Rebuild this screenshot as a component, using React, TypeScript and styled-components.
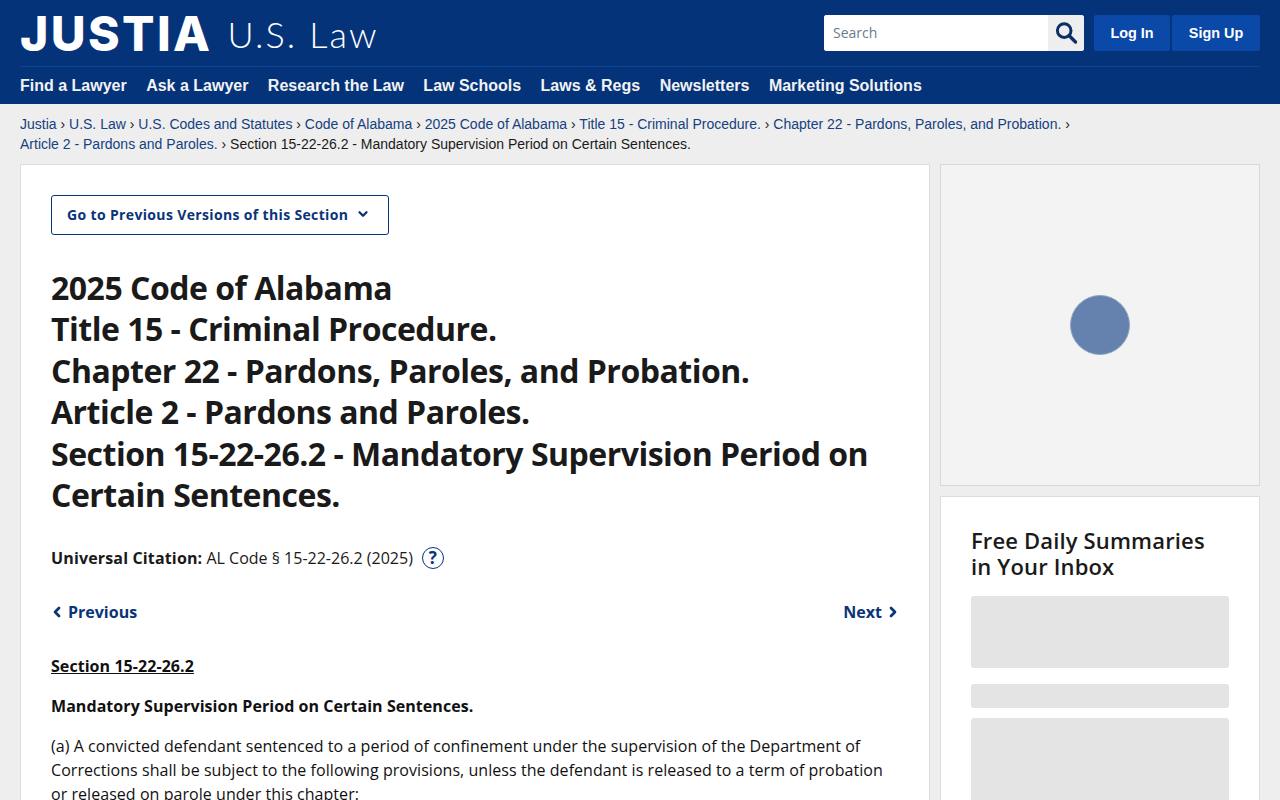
import React from "react";
import styled, { createGlobalStyle } from "styled-components";
import { ChevronDown, ChevronLeft, ChevronRight } from "lucide-react";

const NAVY = "#04337a";
const LINK = "#0a3478";
const SANS = '"Open Sans", sans-serif';
const ARIAL = '"Liberation Sans", Arial, sans-serif';

const GlobalStyle = createGlobalStyle`
  html, body {
    margin: 0;
    padding: 0;
    height: 800px;
    overflow: hidden;
    background: #eeeeee;
    color: #1a1a1a;
    font-family: ${SANS};
  }
  * {
    box-sizing: border-box;
  }
`;

const Header = styled.header`
  height: 104px;
  padding: 0 20px;
  background: ${NAVY};
`;

const HeaderTop = styled.div`
  display: flex;
  align-items: flex-start;
  justify-content: space-between;
  height: 67px;
  border-bottom: 1px solid #0d4391;
`;

const Logo = styled.a`
  display: flex;
  align-items: flex-start;
  gap: 15px;
  height: 66px;
  color: #fff;
  white-space: nowrap;
`;

const LogoMark = styled.span`
  margin-top: 6px;
  font-family: Inter, sans-serif;
  font-size: 48px;
  line-height: 56px;
  font-weight: 800;
  letter-spacing: 2.4px;
`;

const LogoSection = styled.span`
  margin-top: 6px;
  font-family: Lato, sans-serif;
  font-size: 36px;
  line-height: 56px;
  font-weight: 300;
  letter-spacing: 2.1px;
`;

const HeaderActions = styled.div`
  display: flex;
  align-items: center;
  gap: 2px;
  padding-top: 15px;
`;

const SearchForm = styled.form`
  display: flex;
  width: 260px;
  height: 36px;
  margin-right: 8px;
  overflow: hidden;
  background: #fff;
  border-radius: 3px;
`;

const SearchInput = styled.input`
  flex: 1;
  min-width: 0;
  padding: 0 9px 2px;
  border: 0;
  outline: 0;
  font-family: ${SANS};
  font-size: 14px;
  &::placeholder {
    color: #6b7a90;
    opacity: 1;
  }
`;

const SearchButton = styled.button`
  display: flex;
  align-items: center;
  justify-content: center;
  width: 36px;
  padding: 0;
  border: 0;
  background: #eeeeee;
`;

const AuthButton = styled.a`
  display: flex;
  align-items: center;
  justify-content: center;
  width: ${({ $width }: { $width: number }) => $width}px;
  height: 36px;
  background: #0a49a8;
  border-radius: 2px;
  color: #fff;
  font-family: ${ARIAL};
  font-size: 14.4px;
  font-weight: 700;
`;

const Nav = styled.nav`
  display: flex;
  gap: 19.45px;
  padding-top: 10px;
`;

const NavLink = styled.a`
  color: #f2f2f2;
  font-family: ${ARIAL};
  font-size: 16px;
  line-height: 18px;
  font-weight: 700;
  white-space: nowrap;
`;

const Breadcrumbs = styled.div`
  height: 60px;
  padding: 10px 200px 0 20px;
  color: #1a1a1a;
  font-family: ${ARIAL};
  font-size: 14px;
  line-height: 20px;
`;

const Crumb = styled.a`
  color: #15417f;
`;

const Columns = styled.div`
  display: flex;
  gap: 10px;
  padding: 0 20px;
`;

const Main = styled.main`
  flex: none;
  width: 910px;
  height: 700px;
  padding: 30px;
  background: #fff;
  border: 1px solid #dddddd;
`;

const VersionsButton = styled.button`
  display: flex;
  align-items: center;
  gap: 8px;
  width: 338px;
  height: 40px;
  padding: 0 15px 2px;
  background: #fff;
  border: 1px solid ${NAVY};
  border-radius: 3px;
  color: ${LINK};
  font-family: ${SANS};
  font-size: 14px;
  font-weight: 700;
  letter-spacing: 0.35px;
  white-space: nowrap;
`;

const Title = styled.h1`
  margin: 31.6px 0 0;
  color: #1a1a1a;
  font-size: 32px;
  line-height: 41.5px;
  font-weight: 700;
  letter-spacing: -0.5px;
`;

const Citation = styled.div`
  display: flex;
  align-items: center;
  gap: 9px;
  height: 24px;
  margin-top: 30.4px;
  font-size: 16px;
`;

const CitationText = styled.span`
  & b {
    letter-spacing: 0.15px;
  }
`;

const HelpIcon = styled.span`
  display: flex;
  align-items: center;
  justify-content: center;
  width: 22px;
  height: 22px;
  border: 1px solid ${NAVY};
  border-radius: 50%;
  color: ${NAVY};
  font-size: 17px;
  font-weight: 700;
`;

const Pager = styled.div`
  display: flex;
  justify-content: space-between;
  margin: 30px -2px 0 -2px;
`;

const PagerLink = styled.a`
  display: flex;
  align-items: center;
  gap: 3px;
  color: ${LINK};
  font-size: 16px;
  line-height: 24px;
  font-weight: 700;
`;

const SectionNumber = styled.p`
  margin: 30px 0 0;
  color: #111;
  font-size: 16px;
  line-height: 24px;
  font-weight: 700;
  letter-spacing: 0.06px;
  text-decoration: underline;
`;

const SectionName = styled.p`
  margin: 16px 0 0;
  color: #111;
  font-size: 16px;
  line-height: 24px;
  font-weight: 700;
  letter-spacing: 0.06px;
`;

const Body = styled.p`
  margin: 16px 0 0;
  color: #111;
  font-size: 16px;
  line-height: 24px;
  letter-spacing: 0.05px;
`;

const Aside = styled.aside`
  display: flex;
  flex: none;
  flex-direction: column;
  gap: 10px;
  width: 320px;
`;

const AdSlot = styled.div`
  display: flex;
  justify-content: center;
  height: 322px;
  padding-top: 130px;
  background: #f3f3f3;
  border: 1px solid #d8d8d8;
`;

const Spinner = styled.div`
  width: 60px;
  height: 60px;
  background: #6482ad;
  border: 1px solid #8fa5c4;
  border-radius: 50%;
`;

const SignupCard = styled.section`
  height: 400px;
  padding: 30px;
  background: #fff;
  border: 1px solid #dddddd;
`;

const SignupTitle = styled.h2`
  margin: 0;
  color: #1a1a1a;
  font-size: 22px;
  line-height: 26px;
  font-weight: 600;
  letter-spacing: 0.15px;
`;

const Placeholder = styled.div`
  height: ${({ $height }: { $height: number }) => $height}px;
  margin-top: ${({ $gap }: { $gap: number }) => $gap}px;
  background: #e4e4e4;
  border-radius: 3px;
`;

const crumbs = [
  "Justia",
  "U.S. Law",
  "U.S. Codes and Statutes",
  "Code of Alabama",
  "2025 Code of Alabama",
  "Title 15 - Criminal Procedure.",
  "Chapter 22 - Pardons, Paroles, and Probation.",
  "Article 2 - Pardons and Paroles.",
];

const navItems = [
  "Find a Lawyer",
  "Ask a Lawyer",
  "Research the Law",
  "Law Schools",
  "Laws & Regs",
  "Newsletters",
  "Marketing Solutions",
];

const App: React.FunctionComponent = () => (
  <>
    <GlobalStyle />
    <Header>
      <HeaderTop>
        <Logo>
          <LogoMark>JUSTIA</LogoMark>
          <LogoSection>U.S. Law</LogoSection>
        </Logo>
        <HeaderActions>
          <SearchForm>
            <SearchInput placeholder="Search" />
            <SearchButton type="button" aria-label="Search">
              <svg width="24" height="24" viewBox="0 0 24 24" fill="none" stroke="#0b2f66" strokeWidth="3">
                <circle cx="10.2" cy="9.6" r="6.8" />
                <path d="M15.5 15 21.5 21" strokeWidth="3.4" strokeLinecap="round" />
              </svg>
            </SearchButton>
          </SearchForm>
          <AuthButton $width={76}>Log In</AuthButton>
          <AuthButton $width={88}>Sign Up</AuthButton>
        </HeaderActions>
      </HeaderTop>
      <Nav>
        {navItems.map((item) => (
          <NavLink key={item}>{item}</NavLink>
        ))}
      </Nav>
    </Header>
    <Breadcrumbs>
      {crumbs.map((crumb) => (
        <React.Fragment key={crumb}>
          <Crumb>{crumb}</Crumb> ›{" "}
        </React.Fragment>
      ))}
      Section 15-22-26.2 - Mandatory Supervision Period on Certain Sentences.
    </Breadcrumbs>
    <Columns>
      <Main>
        <VersionsButton type="button">
          Go to Previous Versions of this Section
          <ChevronDown size={14} strokeWidth={4} />
        </VersionsButton>
        <Title>
          2025 Code of Alabama
          <br />
          Title 15 - Criminal Procedure.
          <br />
          Chapter 22 - Pardons, Paroles, and Probation.
          <br />
          Article 2 - Pardons and Paroles.
          <br />
          Section 15-22-26.2 - Mandatory Supervision Period on Certain Sentences.
        </Title>
        <Citation>
          <CitationText>
            <b>Universal Citation:</b> AL Code § 15-22-26.2 (2025)
          </CitationText>
          <HelpIcon>?</HelpIcon>
        </Citation>
        <Pager>
          <PagerLink>
            <ChevronLeft size={16} strokeWidth={4} />
            Previous
          </PagerLink>
          <PagerLink>
            Next
            <ChevronRight size={16} strokeWidth={4} />
          </PagerLink>
        </Pager>
        <SectionNumber>Section 15-22-26.2</SectionNumber>
        <SectionName>Mandatory Supervision Period on Certain Sentences.</SectionName>
        <Body>
          (a) A convicted defendant sentenced to a period of confinement under the supervision of the Department of
          Corrections shall be subject to the following provisions, unless the defendant is released to a term of
          probation or released on parole under this chapter:
        </Body>
      </Main>
      <Aside>
        <AdSlot>
          <Spinner />
        </AdSlot>
        <SignupCard>
          <SignupTitle>
            Free Daily Summaries
            <br />
            in Your Inbox
          </SignupTitle>
          <Placeholder $height={72} $gap={17} />
          <Placeholder $height={24} $gap={16} />
          <Placeholder $height={100} $gap={10} />
        </SignupCard>
      </Aside>
    </Columns>
  </>
);

export default App;
